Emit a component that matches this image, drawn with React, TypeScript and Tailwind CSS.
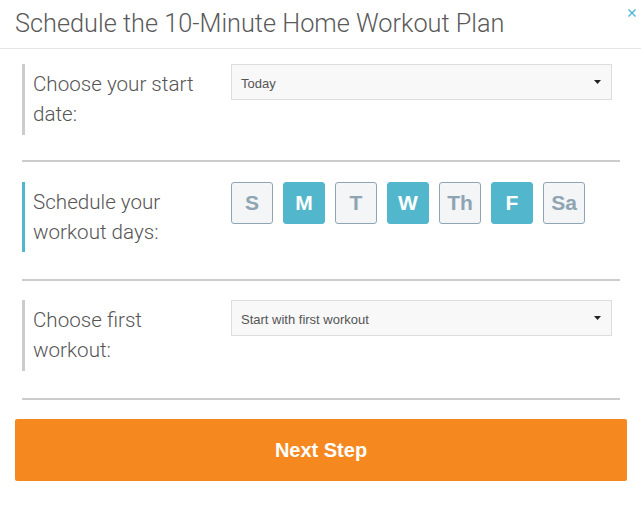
import React from "react";

const Caret = () => (
  <svg width="7" height="4" viewBox="0 0 7 4" className="block">
    <path d="M0 0 H7 L3.5 4 Z" fill="#222" />
  </svg>
);

const SelectBox = ({ value }: { value: string }) => (
  <div className="w-[381px] h-[36px] border border-[#dddddd] bg-[#f8f8f8] flex items-center justify-between pl-[9px] pr-[10px] pt-[3px] text-[13px] text-[#555555] font-['Liberation_Sans',Arial,sans-serif]">
    <span>{value}</span>
    <span className="-mt-[3px]">
      <Caret />
    </span>
  </div>
);

const days = [
  { l: "S", a: false },
  { l: "M", a: true },
  { l: "T", a: false },
  { l: "W", a: true },
  { l: "Th", a: false },
  { l: "F", a: true },
  { l: "Sa", a: false },
];

export default function App() {
  return (
    <div className="w-[641px] h-[511px] bg-white relative font-['Roboto',sans-serif]">
      <div className="h-[49px] border-b border-[#e5e5e5] flex items-center pl-[15px]">
        <h1 className="text-[25.3px] font-light text-[#5a5a5a]">
          Schedule the 10-Minute Home Workout Plan
        </h1>
      </div>
      <button className="absolute left-[628px] top-[9px] w-[8px] h-[8px]">
        <svg width="8" height="8" viewBox="0 0 8 8" className="block">
          <path d="M0.5 0.5 L7.5 7.5 M7.5 0.5 L0.5 7.5" stroke="#4ab5d1" strokeWidth="1.4" />
        </svg>
      </button>

      <div className="ml-[22px] w-[598px]">
        <div className="pt-[15px] pb-[25px] border-b-2 border-[#cccccc] flex">
          <div className="w-[209px] h-[71px] border-l-[3px] border-[#cccccc] pl-[8px] pt-[5px] text-[20.6px] leading-[30px] font-light text-[#555555]">
            Choose your start
            <br />
            date:
          </div>
          <SelectBox value="Today" />
        </div>

        <div className="pt-[20px] pb-[27px] border-b-2 border-[#cccccc] flex">
          <div className="w-[209px] h-[70px] border-l-[3px] border-[#52b7cc] pl-[8px] pt-[5px] text-[20.6px] leading-[30px] font-light text-[#555555]">
            Schedule your
            <br />
            workout days:
          </div>
          <div className="flex gap-[10px] font-['Liberation_Sans',Arial,sans-serif]">
            {days.map((d) =>
              d.a ? (
                <div
                  key={d.l}
                  className="w-[42px] h-[42px] rounded-[3px] bg-[#52b7cc] border border-[#52b7cc] flex items-center justify-center text-white font-bold text-[21px]"
                >
                  {d.l}
                </div>
              ) : (
                <div
                  key={d.l}
                  className="w-[42px] h-[42px] rounded-[3px] bg-[#f3f5f7] border border-[#8fa5b3] flex items-center justify-center text-[#8fa4b2] font-bold text-[21px]"
                >
                  {d.l}
                </div>
              )
            )}
          </div>
        </div>

        <div className="pt-[19px] pb-[27px] border-b-2 border-[#cccccc] flex">
          <div className="w-[209px] h-[71px] border-l-[3px] border-[#cccccc] pl-[8px] pt-[5px] text-[20.6px] leading-[30px] font-light text-[#555555]">
            Choose first
            <br />
            workout:
          </div>
          <SelectBox value="Start with first workout" />
        </div>
      </div>

      <button className="mt-[19px] ml-[15px] w-[612px] h-[62px] rounded-[2px] bg-[#f5891f] text-white font-bold text-[20px] font-['Liberation_Sans',Arial,sans-serif] flex items-center justify-center">
        Next Step
      </button>
    </div>
  );
}
